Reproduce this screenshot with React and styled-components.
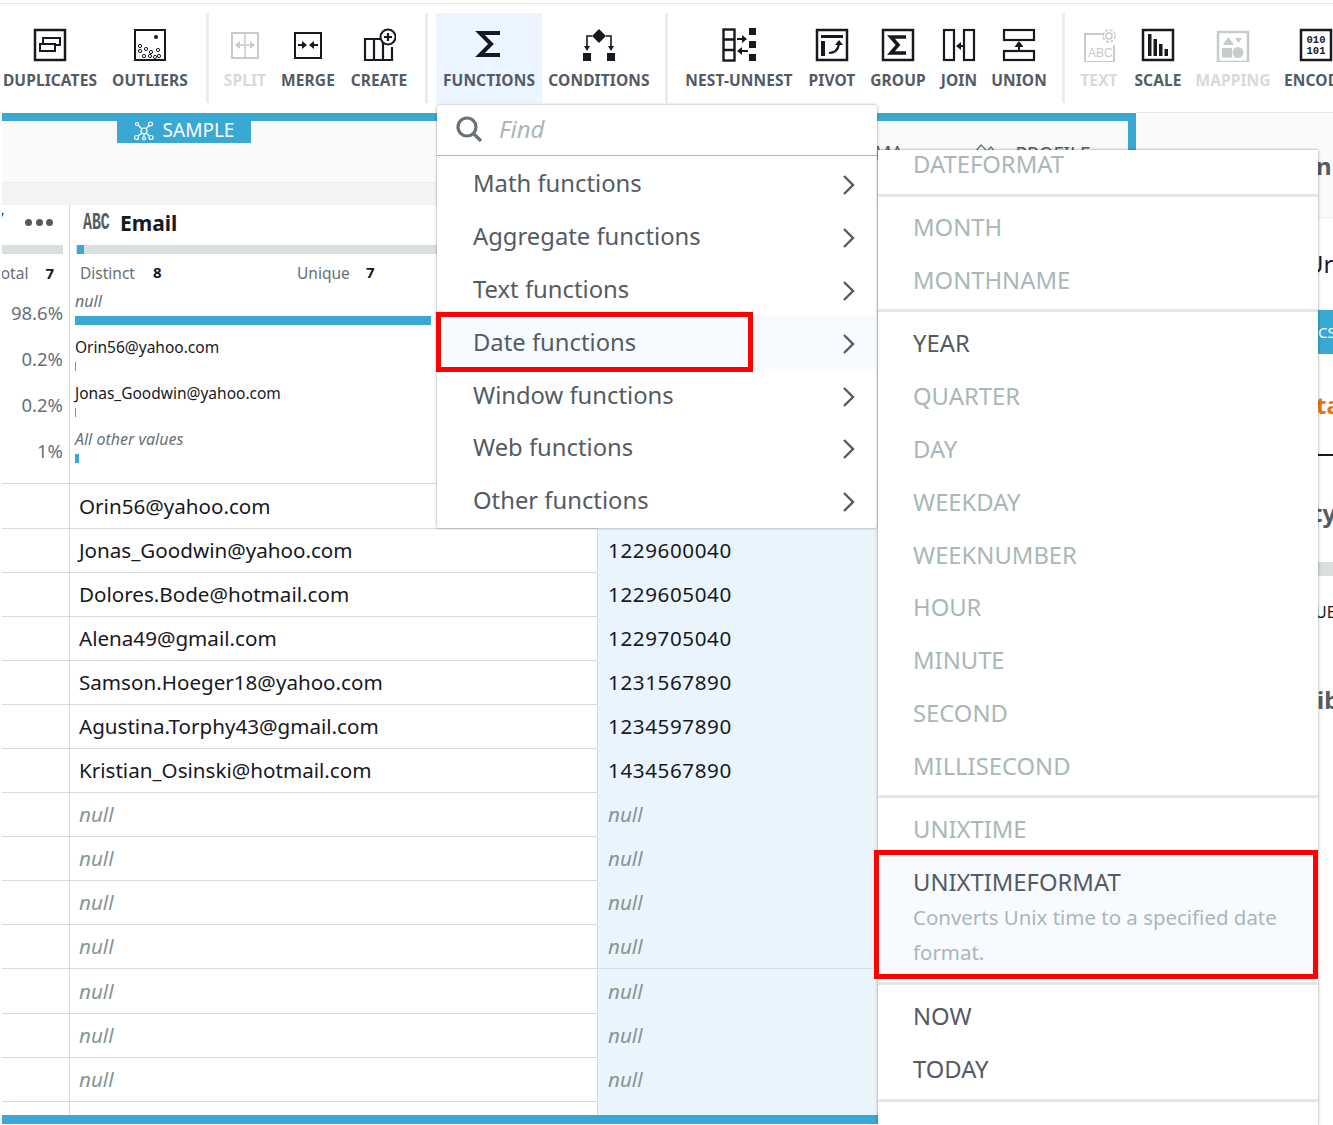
import React from 'react';
import styled, { createGlobalStyle } from 'styled-components';

const GlobalStyle = createGlobalStyle`
  html, body {
    margin: 0;
    height: 1125px;
    overflow: hidden;
    background: #fff;
    font-family: "Noto Sans", "Open Sans", sans-serif;
    color: #16191f;
  }
`;

const Page = styled.div`
  position: relative;
  width: 1333px;
  height: 1125px;
  overflow: hidden;
`;

const TopLine = styled.div`
  margin-top: 3px;
  height: 1px;
  background: #e4e6e6;
`;

const Toolbar = styled.div`
  display: flex;
  height: 90px;
  margin-top: 9px;
  white-space: nowrap;
`;

const ToolGroup = styled.div`
  display: flex;
  flex: none;
  padding-left: ${(p) => p.$left || 0}px;
  padding-right: ${(p) => p.$right || 0}px;
  border-right: ${(p) => (p.$last ? 'none' : '3px solid #eaeded')};
  height: 90px;
`;

const Tool = styled.div`
  flex: none;
  width: ${(p) => p.$w}px;
  display: flex;
  flex-direction: column;
  align-items: center;
  background: ${(p) => (p.$active ? '#ebf5ff' : 'transparent')};
  color: ${(p) => (p.$off ? '#c6cbcb' : '#16191f')};
`;

const ToolIcon = styled.svg`
  width: 34px;
  height: 34px;
  margin-top: 15px;
  flex: none;
`;

const ToolLabel = styled.span`
  margin-top: 6px;
  font-size: 15.5px;
  line-height: 24px;
  font-weight: 700;
  letter-spacing: 0.1px;
  color: ${(p) => (p.$off ? '#d5dbdb' : '#545b64')};
`;

const Workspace = styled.div`
  display: flex;
  height: 1013px;
  margin-top: 9px;
`;

const Main = styled.div`
  flex: none;
  width: 1134px;
  height: 1011px;
  margin-left: 2px;
  margin-top: 1px;
  box-sizing: border-box;
  border-top: 8px solid #39a9d3;
  border-right: 8px solid #39a9d3;
  border-bottom: 9px solid #39a9d3;
  display: flex;
  flex-direction: column;
  overflow: hidden;
`;

const TabsBar = styled.div`
  flex: none;
  height: 61px;
  background: #fafafa;
  display: flex;
  align-items: flex-start;
  padding-left: 115px;
`;

const SampleTab = styled.div`
  width: 134px;
  height: 22px;
  box-sizing: border-box;
  padding-bottom: 3px;
  background: #39a9d3;
  color: #fff;
  font-size: 19px;
  line-height: 19px;
  display: flex;
  align-items: center;
  justify-content: center;
  gap: 9px;
`;

const ViewTab = styled.div`
  margin-left: ${(p) => p.$left}px;
  margin-top: 21px;
  display: flex;
  align-items: center;
  gap: 18px;
  font-size: 19px;
  line-height: 22px;
  color: #545b64;
`;

const Strip = styled.div`
  flex: none;
  height: 23px;
  background: #f2f3f3;
  border-top: 1px solid #eaeded;
  box-sizing: border-box;
`;

const ProfileRow = styled.div`
  flex: none;
  display: grid;
  grid-template-columns: 68px 528px 1fr;
  height: 279px;
  box-sizing: border-box;
  border-bottom: 1px solid #d5dbdb;
`;

const ProfileEdge = styled.div`
  border-right: 1px solid #d5dbdb;
  overflow: hidden;
`;

const EdgeHead = styled.div`
  height: 40px;
  box-sizing: border-box;
  padding: 0 16px 6px 0;
  display: flex;
  align-items: center;
  justify-content: flex-end;
  gap: 3.5px;
`;

const ClippedName = styled.span`
  margin: 0 18px 10px 0;
  font-size: 21px;
  font-weight: 700;
`;

const Dot = styled.span`
  flex: none;
  width: 7px;
  height: 7px;
  border-radius: 50%;
  background: #545b64;
`;

const EdgeBar = styled.div`
  height: 9px;
  width: 61px;
  background: #d9dfdf;
`;

const EdgeStat = styled.div`
  height: 38px;
  box-sizing: border-box;
  padding: 0 15px 1px 0;
  display: flex;
  justify-content: flex-end;
  align-items: center;
  gap: 17px;
  font-size: 15.5px;
  color: #687078;
  overflow: hidden;
`;

const StatValue = styled.b`
  color: #16191f;
  font-size: 15px;
  font-weight: 700;
`;

const Percent = styled.div`
  height: 46px;
  box-sizing: border-box;
  padding: 10px 6px 0 0;
  text-align: right;
  font-size: 18.5px;
  line-height: 22px;
  color: #687078;
`;

const ProfileCol = styled.div`
  border-right: 1px solid #d5dbdb;
  padding-left: 5px;
  min-width: 0;
`;

const ColHead = styled.div`
  height: 40px;
  box-sizing: border-box;
  padding: 0 0 5px 8px;
  display: flex;
  align-items: center;
`;

const TypeTag = styled.span`
  display: inline-block;
  width: 37px;
  flex: none;
  font-size: 24px;
  color: #545b64;
  transform: scaleX(0.62);
  transform-origin: left center;
  font-family: "Liberation Mono", monospace;
  font-weight: 700;
  white-space: nowrap;
`;

const ColName = styled.span`
  font-size: 21px;
  font-weight: 700;
`;

const Track = styled.div`
  height: 9px;
  margin-left: 1px;
  background: #d9dfdf;
  padding-left: 1px;
`;

const TrackFill = styled.div`
  width: 7px;
  height: 9px;
  background: #39a9d3;
`;

const StatRow = styled.div`
  height: 38px;
  box-sizing: border-box;
  padding: 0 0 1px 5px;
  display: flex;
  align-items: center;
  font-size: 15.5px;
  color: #687078;
`;

const Stat = styled.div`
  width: 217px;
  display: flex;
`;

const StatLabel = styled.span`
  width: ${(p) => p.$w}px;
`;

const ValueRow = styled.div`
  height: 46px;
`;

const ValueText = styled.div`
  height: 20px;
  line-height: 19px;
  font-size: ${(p) => (p.$muted ? 16 : 15.5)}px;
  font-style: ${(p) => (p.$muted ? 'italic' : 'normal')};
  color: ${(p) => (p.$muted ? '#687078' : '#16191f')};
  margin-bottom: 4px;
`;

const ValueBar = styled.div`
  height: 9px;
  background: #39a9d3;
`;

const Row = styled.div`
  flex: none;
  display: grid;
  grid-template-columns: 68px 528px 1fr;
  height: 44.05px;
  font-size: 20.6px;
`;

const EdgeCell = styled.div`
  box-sizing: border-box;
  border-right: 1px solid #d5dbdb;
  border-bottom: 1px solid #d5dbdb;
`;

const Cell = styled.div`
  box-sizing: border-box;
  padding-left: ${(p) => p.$pad}px;
  line-height: 44px;
  background: ${(p) => (p.$tinted ? '#eaf4fd' : 'transparent')};
  border-right: ${(p) => (p.$tinted ? 'none' : '1px solid #d5dbdb')};
  border-bottom: 1px solid ${(p) => (p.$tinted ? '#d3dde3' : '#d5dbdb')};
  font-style: ${(p) => (p.$null ? 'italic' : 'normal')};
  letter-spacing: ${(p) => (p.$tinted && !p.$null ? '0.6px' : '0')};
  color: ${(p) => (p.$null ? '#879596' : '#16191f')};
`;

const Side = styled.div`
  flex: 1;
  min-width: 0;
  overflow: hidden;
  border-top: 1px solid #e4e6e6;
  white-space: nowrap;
`;

const SideHead = styled.div`
  height: 105px;
  background: #fafafa;
  border-bottom: 1px solid #eaeded;
  box-sizing: border-box;
  padding: 37px 0 0 180px;
  font-size: 24px;
  line-height: 32px;
  font-weight: 700;
  color: #545b64;
`;

const SideText = styled.div`
  margin-top: ${(p) => p.$top}px;
  padding-left: ${(p) => p.$left || 180}px;
  font-size: ${(p) => p.$size}px;
  line-height: 30px;
  font-weight: ${(p) => (p.$bold ? 700 : 400)};
  color: ${(p) => p.$color};
`;

const SideBlue = styled.div`
  margin-top: 31px;
  height: 44px;
  margin-left: 182px;
  background: #39a9d3;
  color: #fff;
  font-size: 15px;
  line-height: 44px;
`;

const SideRule = styled.div`
  margin-top: 34px;
  margin-left: 182px;
  height: 2px;
  background: #16191f;
`;

const SideBar = styled.div`
  margin-top: 34px;
  margin-left: 182px;
  height: 14px;
  background: #d9dfdf;
`;

/* dropdowns sit over the grid */
const FunctionsMenu = styled.div`
  position: absolute;
  left: 437px;
  top: 105px;
  width: 440px;
  height: 423px;
  background: #fff;
  box-sizing: border-box;
  box-shadow: 0 0 3px rgba(0, 0, 0, 0.4);
  border-radius: 2px;
`;

const SearchBox = styled.div`
  height: 51px;
  box-sizing: border-box;
  border-bottom: 1px solid #aab7b8;
  margin-bottom: 2px;
  display: flex;
  align-items: center;
  padding: 0 0 3px 18px;
  gap: 16px;
  font-size: 24px;
  font-style: italic;
  color: #aab7b8;
`;

const MenuItem = styled.div`
  position: relative;
  height: 52.8px;
  display: flex;
  align-items: center;
  justify-content: space-between;
  padding: 0 21px 2px 36px;
  box-sizing: border-box;
  font-size: 23.8px;
  color: #545b64;
  background: ${(p) => (p.$hover ? '#f7fbff' : 'transparent')};
`;

const ChevronIcon = styled.svg`
  width: 14px;
  height: 22px;
  margin-top: 4px;
  fill: none;
  stroke: #545b64;
  stroke-width: 2.4;
`;

const RedBox = styled.div`
  position: absolute;
  box-sizing: border-box;
  border: 5px solid #f00;
  left: ${(p) => p.$left}px;
  top: ${(p) => p.$top}px;
  width: ${(p) => p.$w}px;
  height: ${(p) => p.$h}px;
  pointer-events: none;
`;

const DatesMenu = styled.div`
  position: absolute;
  left: 878px;
  top: 150px;
  width: 440px;
  height: 975px;
  background: #fff;
  box-shadow: 0 0 3px rgba(0, 0, 0, 0.4);
`;

const Section = styled.div`
  margin-top: ${(p) => p.$first || 0}px;
  padding: ${(p) => (p.$first ? 0 : p.$top || 4)}px 0 ${(p) => p.$bottom || 3}px;
  border-bottom: 3px solid #e4e6e6;
`;

const DateItem = styled.div`
  height: 52.8px;
  line-height: 52px;
  padding-left: 35px;
  font-size: 23.8px;
  color: ${(p) => (p.$on ? '#545b64' : '#aab7b8')};
`;

const DateDetail = styled.div`
  position: relative;
  height: 120px;
  padding: 10px 30px 0 35px;
  box-sizing: border-box;
  background: #f7fbff;
`;

const DetailTitle = styled.div`
  font-size: 23.8px;
  line-height: 35px;
  color: #545b64;
`;

const DetailText = styled.div`
  font-size: 20.45px;
  line-height: 35px;
  color: #aab7b8;
`;

const Sigma = ({ d = 'M28 5H8l11 11L8 27h20', w = 4 }) => (
  <path d={d} fill="none" stroke="currentColor" strokeWidth={w} strokeLinejoin="miter" />
);

const Frame = ({ x = 2, y = 2, w = 30, h = 30, s = 2.5 }) => (
  <rect x={x} y={y} width={w} height={h} fill="none" stroke="currentColor" strokeWidth={s} />
);

const ICONS = {
  duplicates: (
    <>
      <Frame />
      <path d="M13 15v-5h17v7h-6" transform="translate(-3 0)" fill="none" stroke="currentColor" strokeWidth="2" />
      <rect x="7" y="16" width="15" height="7" fill="none" stroke="currentColor" strokeWidth="2" />
    </>
  ),
  outliers: (
    <>
      <Frame s={2} />
      <circle cx="23" cy="9" r="2" fill="currentColor" />
      {[[7, 18], [13, 21], [7, 23], [18, 24], [25, 22], [11, 28], [17, 28], [26, 28], [22, 29]].map(([x, y]) => (
        <circle key={x + '-' + y} cx={x} cy={y} r="1.6" fill="none" stroke="currentColor" strokeWidth="1" />
      ))}
    </>
  ),
  split: (
    <>
      <Frame x="4" y="5" w="26" h="25" s="2" />
      <path d="M17 5v25M8 17h18" fill="none" stroke="currentColor" strokeWidth="1.5" />
      <path d="M7 17l5-4v8zM27 17l-5-4v8z" fill="currentColor" />
    </>
  ),
  merge: (
    <>
      <Frame x="4" y="5" w="26" h="25" s="2" />
      <path d="M7 17h5M27 17h-5" stroke="currentColor" strokeWidth="2" />
      <path d="M16 17l-5-4v8zM18 17l5-4v8z" fill="currentColor" />
    </>
  ),
  create: (
    <>
      <path d="M23 11H3v21h27V19M12 11v21M21 11v21" fill="none" stroke="currentColor" strokeWidth="2.2" />
      <circle cx="26" cy="9" r="7.5" fill="#fff" stroke="currentColor" strokeWidth="2" />
      <path d="M26 5v8M22 9h8" stroke="currentColor" strokeWidth="2.2" />
    </>
  ),
  functions: <Sigma />,
  conditions: (
    <>
      <path d="M17 1l7 7-7 7-7-7z" fill="currentColor" />
      <path d="M10 8H5v11M24 8h5v11" fill="none" stroke="currentColor" strokeWidth="1.6" />
      <path d="M2 18h6l-3 5zM26 18h6l-3 5z" fill="currentColor" />
      <rect x="1" y="25" width="8" height="8" fill="currentColor" />
      <rect x="25" y="25" width="8" height="8" fill="currentColor" />
    </>
  ),
  nest: (
    <>
      <rect x="1.5" y="1.5" width="11" height="31" fill="none" stroke="currentColor" strokeWidth="2.4" />
      <path d="M1.5 11.5h11M1.5 22h11" stroke="currentColor" strokeWidth="2.4" />
      <rect x="27" y="0" width="7" height="7" fill="currentColor" />
      <rect x="27" y="13" width="7" height="7" fill="currentColor" />
      <rect x="27" y="26" width="7" height="7" fill="currentColor" />
      <path d="M15 11h6" stroke="currentColor" strokeWidth="2" />
      <path d="M25 11l-5-4v8z" fill="currentColor" />
      <path d="M20 23h6" stroke="currentColor" strokeWidth="2" />
      <path d="M15 23l5-4v8z" fill="currentColor" />
    </>
  ),
  pivot: (
    <>
      <Frame />
      <path d="M6 7h22v3H6z" fill="currentColor" />
      <path d="M6 13h4v15H6z" fill="currentColor" />
      <path d="M14 25c6 0 9-3 10-9" fill="none" stroke="currentColor" strokeWidth="2.2" />
      <path d="M24 12l4 5h-8z" fill="currentColor" />
    </>
  ),
  group: (
    <>
      <Frame />
      <Sigma d="M25 9H10l7 8-7 8h15" w="3.6" />
    </>
  ),
  join: (
    <>
      <rect x="2" y="2" width="10" height="30" fill="none" stroke="currentColor" strokeWidth="2.2" />
      <rect x="22" y="2" width="10" height="30" fill="none" stroke="currentColor" strokeWidth="2.2" />
      <path d="M17 18h5" fill="none" stroke="currentColor" strokeWidth="2" />
      <path d="M14 18l5-4v8z" fill="currentColor" />
    </>
  ),
  union: (
    <>
      <rect x="2" y="2" width="30" height="10" fill="none" stroke="currentColor" strokeWidth="2.2" />
      <rect x="2" y="23" width="30" height="9" fill="none" stroke="currentColor" strokeWidth="2.2" />
      <path d="M17 17v6" fill="none" stroke="currentColor" strokeWidth="2" />
      <path d="M17 13l-4.500 6h9z" fill="currentColor" />
    </>
  ),
  text: (
    <>
      <path d="M22 6H3v28h29V17" fill="none" stroke="currentColor" strokeWidth="2" />
      <circle cx="27" cy="8" r="3" fill="none" stroke="currentColor" strokeWidth="1.5" />
      <circle cx="27" cy="8" r="6" fill="none" stroke="currentColor" strokeWidth="1.5" strokeDasharray="3 1.7" />
      <text x="6" y="29" fontSize="12" fontFamily="Liberation Sans, sans-serif" fill="currentColor">ABC</text>
    </>
  ),
  scale: (
    <>
      <Frame />
      <path d="M7 6h3.500v22H7zM12.500 11H16v17h-3.500zM18 16h3.500v12H18zM23.500 21H27v7h-3.500z" fill="currentColor" />
    </>
  ),
  mapping: (
    <>
      <Frame y="4" h="30" />
      <path d="M12.500 9l5.500 8H7z M19 10h7l-3.500 5z" fill="currentColor" />
      <rect x="6" y="20" width="10" height="9.500" fill="currentColor" />
      <circle cx="22" cy="24.500" r="5.500" fill="currentColor" />
    </>
  ),
  encode: (
    <>
      <Frame />
      <text x="17" y="15" fontSize="10.500" fontWeight="700" textAnchor="middle" fontFamily="Liberation Mono, monospace" fill="currentColor">010</text>
      <text x="17" y="26" fontSize="10.500" fontWeight="700" textAnchor="middle" fontFamily="Liberation Mono, monospace" fill="currentColor">101</text>
    </>
  ),
};

const toolGroups = [
  {
    right: 6,
    tools: [
      { id: 'duplicates', label: 'DUPLICATES', w: 100 },
      { id: 'outliers', label: 'OUTLIERS', w: 100 },
    ],
  },
  {
    right: 2,
    tools: [
      { id: 'split', label: 'SPLIT', w: 72, off: true },
      { id: 'merge', label: 'MERGE', w: 54 },
      { id: 'create', label: 'CREATE', w: 88 },
    ],
  },
  {
    left: 8,
    right: 9,
    tools: [
      { id: 'functions', label: 'FUNCTIONS', w: 106, active: true },
      { id: 'conditions', label: 'CONDITIONS', w: 114 },
    ],
  },
  {
    tools: [
      { id: 'nest', label: 'NEST-UNNEST', w: 142 },
      { id: 'pivot', label: 'PIVOT', w: 44 },
      { id: 'group', label: 'GROUP', w: 88 },
      { id: 'join', label: 'JOIN', w: 34 },
      { id: 'union', label: 'UNION', w: 86 },
    ],
  },
  {
    last: true,
    tools: [
      { id: 'text', label: 'TEXT', w: 68, off: true },
      { id: 'scale', label: 'SCALE', w: 50 },
      { id: 'mapping', label: 'MAPPING', w: 100, off: true },
      { id: 'encode', label: 'ENCODE', w: 66 },
    ],
  },
];

const values = [
  { pct: '98.6%', label: 'null', muted: true, bar: 356 },
  { pct: '0.2%', label: 'Orin56@yahoo.com', bar: 1 },
  { pct: '0.2%', label: 'Jonas_Goodwin@yahoo.com', bar: 1 },
  { pct: '1%', label: 'All other values', muted: true, bar: 4 },
];

const rows = [
  ['Orin56@yahoo.com', ''],
  ['Jonas_Goodwin@yahoo.com', '1229600040'],
  ['Dolores.Bode@hotmail.com', '1229605040'],
  ['Alena49@gmail.com', '1229705040'],
  ['Samson.Hoeger18@yahoo.com', '1231567890'],
  ['Agustina.Torphy43@gmail.com', '1234597890'],
  ['Kristian_Osinski@hotmail.com', '1434567890'],
  ...Array.from({ length: 7 }, () => ['null', 'null']),
  ['', ''],
];

const functionGroups = ['Math functions', 'Aggregate functions', 'Text functions', 'Date functions', 'Window functions', 'Web functions', 'Other functions'];

const Chevron = () => (
  <ChevronIcon viewBox="0 0 14 22">
    <path d="M2 2l9 9-9 9" />
  </ChevronIcon>
);

const Search = () => (
  <svg width="28" height="28" viewBox="0 0 28 28" fill="none" stroke="#687078" strokeWidth="3.2">
    <circle cx="12" cy="12" r="9" />
    <path d="M18.500 18.500L26 26" />
  </svg>
);

const SampleIcon = () => (
  <svg width="20" height="20" viewBox="0 0 20 20" fill="none" stroke="#fff" strokeWidth="1.2">
    <circle cx="10" cy="10" r="3" />
    <circle cx="16.500" cy="3" r="2" />
    <circle cx="3" cy="3" r="1.500" />
    <circle cx="2.500" cy="16.500" r="2" />
    <circle cx="10" cy="17.500" r="1.500" />
    <circle cx="17" cy="16.500" r="2" />
    <path d="M8 8L4 4M12 8l3-3.500M8 12l-4 3M12 12l3.500 3M10 13v3" />
  </svg>
);

const ProfileIcon = () => (
  <svg width="24" height="24" viewBox="0 0 24 24" fill="none" stroke="#687078" strokeWidth="1.2">
    <path d="M2 10l6-7 6 6 4-4 5 6" />
    <rect x="1" y="9" width="3" height="14" fill="#687078" />
    <rect x="11" y="13" width="3" height="10" fill="#687078" />
  </svg>
);

export default function App() {
  return (
    <>
      <GlobalStyle />
      <Page>
        <TopLine />
        <Toolbar>
          {toolGroups.map((g) => (
            <ToolGroup key={g.tools[0].id} $left={g.left} $right={g.right} $last={g.last}>
              {g.tools.map((t) => (
                <Tool key={t.id} $w={t.w} $off={t.off} $active={t.active}>
                  <ToolIcon viewBox="0 0 34 34">{ICONS[t.id]}</ToolIcon>
                  <ToolLabel $off={t.off}>{t.label}</ToolLabel>
                </Tool>
              ))}
            </ToolGroup>
          ))}
        </Toolbar>
        <Workspace>
          <Main>
            <TabsBar>
              <SampleTab>
                <SampleIcon />
                SAMPLE
              </SampleTab>
              <ViewTab $left={576}>SCHEMA</ViewTab>
              <ViewTab $left={70}>
                <ProfileIcon />
                PROFILE
              </ViewTab>
            </TabsBar>
            <Strip />
            <ProfileRow>
              <ProfileEdge>
                <EdgeHead>
                  <ClippedName>y</ClippedName>
                  <Dot />
                  <Dot />
                  <Dot />
                </EdgeHead>
                <EdgeBar />
                <EdgeStat>
                  <span>Total</span>
                  <StatValue>7</StatValue>
                </EdgeStat>
                {values.map((v) => (
                  <Percent key={v.label}>{v.pct}</Percent>
                ))}
              </ProfileEdge>
              <ProfileCol>
                <ColHead>
                  <TypeTag>ABC</TypeTag>
                  <ColName>Email</ColName>
                </ColHead>
                <Track>
                  <TrackFill />
                </Track>
                <StatRow>
                  <Stat>
                    <StatLabel $w={73}>Distinct</StatLabel>
                    <StatValue>8</StatValue>
                  </Stat>
                  <Stat>
                    <StatLabel $w={69}>Unique</StatLabel>
                    <StatValue>7</StatValue>
                  </Stat>
                </StatRow>
                {values.map((v) => (
                  <ValueRow key={v.label}>
                    <ValueText $muted={v.muted}>{v.label}</ValueText>
                    <ValueBar style={{ width: v.bar }} />
                  </ValueRow>
                ))}
              </ProfileCol>
              <div />
            </ProfileRow>
            {rows.map(([email, stamp], i) => (
              <Row key={i}>
                <EdgeCell />
                <Cell $pad={9} $null={email === 'null'}>{email}</Cell>
                <Cell $pad={10} $tinted $null={stamp === 'null'}>{stamp}</Cell>
              </Row>
            ))}
          </Main>
          <Side>
            <SideHead>n</SideHead>
            <SideText $top={31} $left={170} $size={24} $color="#16191f">Ur</SideText>
            <SideBlue>CS</SideBlue>
            <SideText $top={36} $size={24} $bold $color="#ec7211">ta</SideText>
            <SideRule />
            <SideText $top={42} $left={176} $size={24} $bold $color="#545b64">ty</SideText>
            <SideBar />
            <SideText $top={21} $left={179} $size={16} $color="#16191f">UE</SideText>
            <SideText $top={58} $left={181} $size={24} $bold $color="#545b64">ib</SideText>
          </Side>
        </Workspace>

        <FunctionsMenu>
          <SearchBox>
            <Search />
            Find
          </SearchBox>
          {functionGroups.map((name) => (
            <MenuItem key={name} $hover={name === 'Date functions'}>
              {name}
              <Chevron />
              {name === 'Date functions' && <RedBox $left={-1} $top={-4} $w={317} $h={60} />}
            </MenuItem>
          ))}
        </FunctionsMenu>

        <DatesMenu>
          <Section $first={-12}>
            <DateItem>DATEFORMAT</DateItem>
          </Section>
          <Section>
            <DateItem>MONTH</DateItem>
            <DateItem>MONTHNAME</DateItem>
          </Section>
          <Section $top={5} $bottom={2}>
            <DateItem $on>YEAR</DateItem>
            {['QUARTER', 'DAY', 'WEEKDAY', 'WEEKNUMBER', 'HOUR', 'MINUTE', 'SECOND', 'MILLISECOND'].map((n) => (
              <DateItem key={n}>{n}</DateItem>
            ))}
          </Section>
          <Section $top={5} $bottom={7}>
            <DateItem>UNIXTIME</DateItem>
            <DateDetail>
              <DetailTitle>UNIXTIMEFORMAT</DetailTitle>
              <DetailText>Converts Unix time to a specified date format.</DetailText>
              <RedBox $left={-4} $top={-5} $w={444} $h={129} />
            </DateDetail>
          </Section>
          <Section $top={5}>
            <DateItem $on>NOW</DateItem>
            <DateItem $on>TODAY</DateItem>
          </Section>
        </DatesMenu>
      </Page>
    </>
  );
}
